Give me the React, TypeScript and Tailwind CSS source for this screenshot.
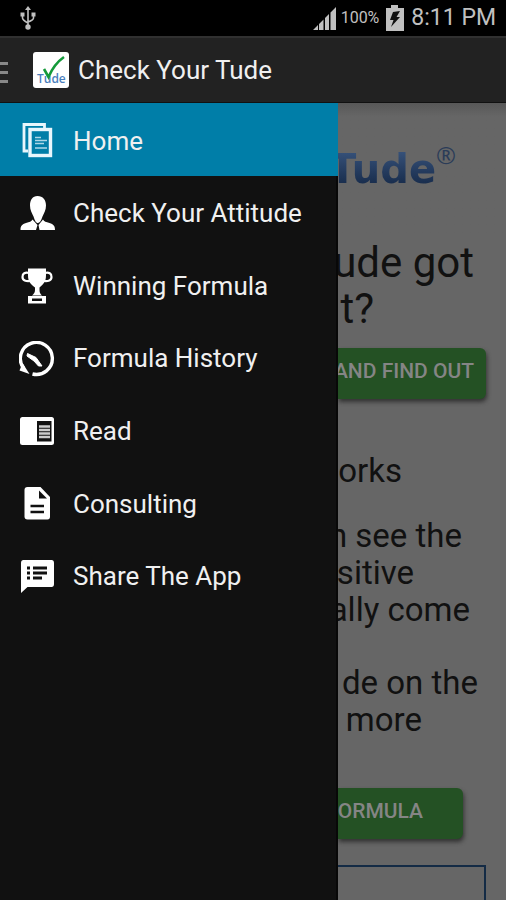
import type { ReactNode } from "react";
import clsx from "clsx";

function HomeIcon() {
  return (
    <svg className="size-9" viewBox="0 0 36 36" fill="none" stroke="#e8f6fc" aria-hidden="true">
      <path d="M9 28H5V1.500H25.500V5" strokeWidth="2.800" />
      <rect x="11" y="6.500" width="20.500" height="26" strokeWidth="3.400" />
      <path d="M16 14.500H22M16 17.500H28M16 20.500H25M16 25H28" strokeWidth="1.400" opacity=".75" />
    </svg>
  );
}

function PersonIcon() {
  return (
    <svg className="size-9" viewBox="0 0 36 36" fill="#fff" aria-hidden="true">
      <path d="M18.500 0C24 0 27 4 27 9.500C27 14 25 17 23.500 20.500C22 25 20.500 27 19 27C17 27 16 25 14.500 20.500C13 17 11 14 11 9.500C11 4 13.500 0 18.500 0Z" />
      <path d="M13.500 23.500L18.500 29L17 34H1.500C1.500 29.500 3 28.500 7 27C10.500 26 12.500 25.500 13.500 23.500ZM24 23.500C25 25.500 27 26 30.500 27C34.500 28.500 36 29.500 36 34H20.500L19.500 29Z" />
    </svg>
  );
}

function TrophyIcon() {
  return (
    <svg className="size-9" viewBox="0 0 36 36" fill="#fff" aria-hidden="true">
      <path d="M9 .5H27V7C27 14 24.500 16 20.500 19.500V22C20.500 25 21.500 26 23 27.500H13C14.500 26 16 25 16 22V19.500C11.500 16 9 14 9 7Z" />
      <path
        d="M10 5C6 4 3.500 5.500 3.500 9C3.500 12.500 7 13.500 11 13M26 5C30 4 32.500 5.500 32.500 9C32.500 12.500 29 13.500 25 13"
        fill="none"
        stroke="#fff"
        strokeWidth="2.200"
      />
      <path d="M9 28H27V35.500H9ZM13 30.500V33H23V30.500Z" fillRule="evenodd" />
    </svg>
  );
}

function HistoryIcon() {
  return (
    <svg className="size-9" viewBox="0 0 36 36" fill="none" stroke="#fff" aria-hidden="true">
      <path d="M4.500 27A16 16 0 1 1 13.500 33" strokeWidth="3.400" />
      <path d="M.5 29.500L3.500 22L10.500 33Z" fill="#fff" stroke="none" />
      <path d="M8.500 12.500L17 16.500L23 25L19.500 25L15 20L8 15Z" fill="#fff" strokeWidth="1" />
    </svg>
  );
}

function ReadIcon() {
  return (
    <svg className="size-9" viewBox="0 0 36 36" aria-hidden="true">
      <rect x="1" y="3" width="34" height="28" rx="2.500" fill="#fff" />
      <path d="M18 7H32.500V27.500H18Z" fill="#111" />
      <path d="M20 12.500H31M20 16H31M20 19.500H31M20 23H31" stroke="#ccc" strokeWidth="2.400" />
    </svg>
  );
}

function DocumentIcon() {
  return (
    <svg className="size-9" viewBox="0 0 36 36" aria-hidden="true">
      <path d="M8.500 1H21.500L31 11V30.500Q31 33.500 28.500 33.500H8.500Q5.500 33.500 5.500 30.500V4Q5.500 1 8.500 1Z" fill="#fff" />
      <path d="M20 4.500V12.500H28Z" fill="#111" />
      <path d="M11.500 20H25M11.500 26H25" stroke="#111" strokeWidth="2.400" />
    </svg>
  );
}

function ShareIcon() {
  return (
    <svg className="size-9" viewBox="0 0 36 36" aria-hidden="true">
      <path d="M4.500 1H32.500Q35 1 35 4V25Q35 28 32.500 28H8.500L2 34V4Q2 1 4.500 1Z" fill="#fff" />
      <path d="M8 9H11M8 14H11M8 19H11M14 9H28M14 14H28M14 19H23" stroke="#111" strokeWidth="2.800" />
    </svg>
  );
}

const menu: { label: string; icon: ReactNode }[] = [
  { label: "Home", icon: <HomeIcon /> },
  { label: "Check Your Attitude", icon: <PersonIcon /> },
  { label: "Winning Formula", icon: <TrophyIcon /> },
  { label: "Formula History", icon: <HistoryIcon /> },
  { label: "Read", icon: <ReadIcon /> },
  { label: "Consulting", icon: <DocumentIcon /> },
  { label: "Share The App", icon: <ShareIcon /> },
];

function StatusBar() {
  return (
    <div className="flex h-9 items-center bg-black pl-5 pr-2.5 text-[#c0c0c0]">
      <svg className="h-6 w-4" viewBox="0 0 16 24" fill="none" stroke="currentColor" strokeWidth="1.600" aria-hidden="true">
        <path d="M8 3V21M2.500 9V12Q2.500 14 8 17M13.500 9V12Q13.500 14 8 16" />
        <path d="M8 0L11 4H5ZM.5 6.500H4.500V10.500H.5ZM11.500 6.500H15.500V10.500H11.500Z" fill="currentColor" stroke="none" />
        <circle cx="8" cy="21" r="2.700" fill="currentColor" stroke="none" />
      </svg>
      <div className="ml-auto flex items-center">
        <svg className="h-6 w-6" viewBox="0 0 24 24" fill="currentColor" aria-hidden="true">
          <path d="M0 24L5 19V24ZM6 18L10.500 13.500V24H6ZM12 12L16 8V24H12ZM17.500 6.500L23 1V24H17.500Z" />
        </svg>
        <span className="ml-1 text-base">100%</span>
        <svg className="ml-1.5 h-7 w-5" viewBox="0 0 20 28" aria-hidden="true">
          <path d="M6 1H13V4H19V27H1V4H6Z" fill="currentColor" />
          <path d="M8 8L15 7L11.500 13H15L6 23L8.500 16H5Z" fill="#111" />
        </svg>
        <span className="ml-1.5 text-[23px]">8:11 PM</span>
      </div>
    </div>
  );
}

function ActionBar() {
  return (
    <header className="flex h-[66px] items-center border-t-2 border-[#303030] bg-[#222]">
      <button aria-label="Open menu" className="flex flex-col gap-1.5 pt-1">
        <span className="h-[3px] w-2 bg-[#888]" />
        <span className="h-[3px] w-2 bg-[#888]" />
        <span className="h-[3px] w-2 bg-[#888]" />
      </button>
      <svg className="ml-6 size-[38px]" viewBox="0 0 38 38" aria-hidden="true">
        <rect x="1" y="1" width="36" height="36" rx="3" fill="#fff" />
        <text x="5" y="32" fontFamily="Open Sans, sans-serif" fontSize="12" fontWeight="600" fill="#4a80bd">
          Tude
        </text>
        <path d="M12 18L16.500 26Q22 13 32 6" fill="none" stroke="#159a3a" strokeWidth="2.600" />
      </svg>
      <h1 className="ml-2 text-[26px] text-[#f0f0f0]">Check Your Tude</h1>
    </header>
  );
}

function Drawer() {
  return (
    <nav className="w-[338px] shrink-0 border-r-2 border-[#080808] bg-[#111]">
      <ul className="grid h-[508px] auto-rows-fr">
        {menu.map(({ label, icon }, i) => (
          <li key={label} className="flex">
            <a
              href="#"
              className={clsx(
                "flex flex-1 items-center gap-[18px] pt-1 pl-[19px] text-[26px] text-[#f0f0f0]",
                i === 0 && "-mr-0.5 bg-[#007ea8]"
              )}
            >
              {icon}
              {label}
            </a>
          </li>
        ))}
      </ul>
    </nav>
  );
}

// Page behind the open drawer, already dimmed
function Page() {
  return (
    <main className="flex min-w-0 flex-1 flex-col overflow-hidden whitespace-nowrap bg-[#666] text-[#111]">
      <div className="flex h-[136px] items-start justify-end bg-linear-to-b from-[#585858] to-[#666] to-10% pr-[52px] pt-9">
        <span className="bg-linear-to-b from-[#37527a] from-20% to-[#162a49] to-80% bg-clip-text font-['DejaVu_Sans',sans-serif] text-[40px] leading-[60px] font-bold text-transparent">
          Tude
        </span>
        <sup className="top-0 -mr-0.5 pt-1 font-['Open_Sans',sans-serif] text-2xl leading-6 text-[#2b3c58]">®</sup>
      </div>

      <h2 className="flex flex-col items-end pt-px text-[42px] leading-[46px]">
        <span className="pr-8">ude got</span>
        <span className="pr-33">t?</span>
      </h2>
      <button className="mt-4 mr-5 flex h-[51px] items-center justify-end rounded-r-md bg-[#245124] pr-3 pb-1 text-[21px] font-medium text-[#858585] shadow-[1px_3px_4px_#333]">
        AND FIND OUT
      </button>

      <h3 className="mt-[53px] flex justify-end pr-26 text-[33px] leading-[37px]">orks</h3>
      <p className="mt-7 flex flex-col items-end text-[33px] leading-[37px]">
        <span className="pr-11">n see the</span>
        <span className="pr-23">sitive</span>
        <span className="pr-9">ally come</span>
      </p>
      <p className="mt-9 flex flex-col items-end text-[33px] leading-[37px]">
        <span className="pr-7">de on the</span>
        <span className="pr-21">more</span>
      </p>
      <button className="mt-[50px] mr-[43px] flex h-[51px] items-center justify-end rounded-r-md bg-[#245124] pr-10 pb-1 text-[21px] font-medium text-[#858585] shadow-[1px_3px_4px_#333]">
        ORMULA
      </button>
      <div className="mt-[26px] mr-5 min-h-4 flex-1 border-2 border-b-0 border-l-0 border-[#142b45]" />
    </main>
  );
}

export default function App() {
  return (
    <div className="flex min-h-screen flex-col bg-black font-[Roboto,sans-serif]">
      <StatusBar />
      <ActionBar />
      <div className="flex flex-1 border-t border-[#111]">
        <Drawer />
        <Page />
      </div>
    </div>
  );
}
